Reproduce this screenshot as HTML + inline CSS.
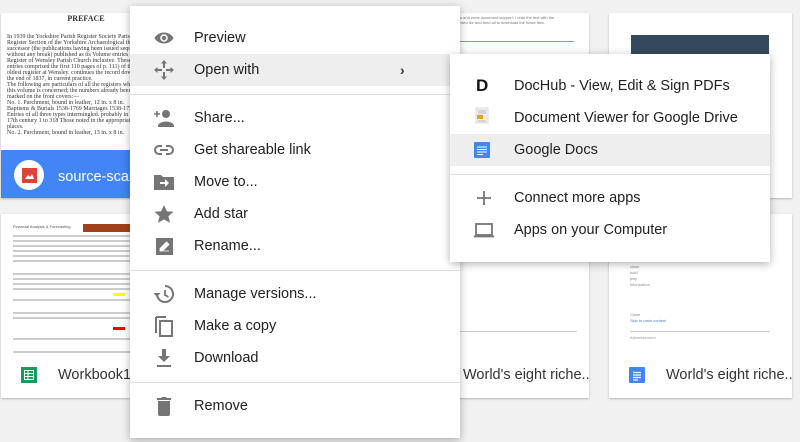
<!DOCTYPE html>
<html><head><style>
body{margin:0;width:800px;height:442px;background:#f1f1f1;font-family:"Liberation Sans",Arial,sans-serif;position:relative;overflow:hidden}
.card{position:absolute;background:#fff;box-shadow:0 1px 2px rgba(0,0,0,.25);overflow:hidden}
.menu{position:absolute;background:#fff;box-shadow:0 2px 8px rgba(0,0,0,.3)}
.it{position:absolute;left:0;right:0;height:32px;font-size:14.5px;color:#212121;line-height:32px;white-space:nowrap}
.it .t{position:absolute;left:64px}
.it svg{position:absolute;left:22px;top:4px}
.hl{background:#eeeeee}
.div{position:absolute;left:0;right:0;height:1px;background:#e0e0e0}
.ft{position:absolute;font-size:14.5px;color:#333;white-space:nowrap}
.ln{height:2px;background:#ccc;margin:3px 0}
</style></head><body>
<!-- card1 -->
<div class="card" style="left:1px;top:13px;width:150px;height:185px">
 <div style="position:absolute;left:0;top:0;width:150px;height:137px;font-family:'Liberation Serif',serif;font-size:6px;color:#333;padding:3px 6px;box-sizing:border-box;line-height:6px">
  <div style="text-align:center;font-weight:bold;font-size:8px;margin-left:20px">PREFACE</div><br><br>
  In 1939 the Yorkshire Parish Register Society Parish Register Section of the Yorkshire Archaeological the successor (the publications having been issued sequence without any break) published as its Volume entries in the Register of Wensley Parish Church inclusive. These entries comprised the first 110 pages of p. 111) of the oldest register at Wensley. continues the record down to the end of 1837, in current practice.<br>The following are particulars of all the registers which this volume is concerned; the numbers already been marked on the front covers:—<br>No. 1. Parchment, bound in leather, 12 in. x 8 in. Baptisms &amp; Burials 1538-1769 Marriages 1538-1754 Entries of all three types intermingled. probably in the 17th century 1 to 318 Those noted in the appropriate places.<br>No. 2. Parchment, bound in leather, 13 in. x 8 in.
 </div>
 <div style="position:absolute;left:0;top:137px;width:150px;height:48px;background:#4285f4"></div>
 <div style="position:absolute;left:13px;top:147px;width:30px;height:30px;border-radius:50%;background:#fff"></div>
 <div style="position:absolute;left:21px;top:155px;width:15px;height:15px;background:#db4437"></div>
 <svg style="position:absolute;left:21px;top:155px" width="15" height="15"><path d="M3 11 L6 7 L8 9 L10 6 L12 11Z" fill="#fff"/></svg>
 <div style="position:absolute;left:57px;top:154px;color:#fff;font-size:14.5px;line-height:20px;white-space:nowrap">source-scann</div>
</div>
<!-- card2 -->
<div class="card" style="left:1px;top:214px;width:150px;height:184px">
 <div style="position:absolute;left:12px;top:10px;width:140px;font-size:4px;color:#555">
  <div style="height:8px;background:#fff;position:relative">Financial Analysis &amp; Forecasting<div style="position:absolute;left:70px;top:0;width:70px;height:8px;background:#a0411a"></div></div>
  <div class="ln"></div><div class="ln"></div><div class="ln"></div><div class="ln"></div><div class="ln"></div><div class="ln"></div><br>
  <div class="ln"></div><div class="ln"></div><div class="ln"></div><div class="ln"></div><div style="height:3px;width:12px;background:#ff0;margin-left:100px"></div><div class="ln"></div><br><div class="ln"></div><div class="ln"></div><br>
  <div style="height:3px;width:12px;background:#f00;margin-left:100px"></div><br><div class="ln"></div><br><div class="ln"></div>
 </div>
 <div style="position:absolute;left:20px;top:153px;width:16px;height:16px;background:#0f9d58"></div>
 <svg style="position:absolute;left:20px;top:153px" width="16" height="16"><path d="M3.5 3.5h9v9h-9zM3.5 6.5h9M3.5 9.5h9M7 3.5v9" stroke="#fff" fill="none"/></svg>
 <div class="ft" style="left:57px;top:153px">Workbook1-2</div>
</div>
<!-- card3,6 -->
<div class="card" style="left:400px;top:13px;width:189px;height:185px">
 <div style="position:absolute;left:50px;top:28px;width:124px;height:1px;background:#6a9fd8"></div>
 <div style="position:absolute;left:50px;top:2px;width:120px;font-size:4px;color:#777;line-height:5px">shares and ends document support. I read the text with the converted file and tried all to download the Word files.</div>
</div>
<div class="card" style="left:400px;top:214px;width:189px;height:184px">
 <div style="position:absolute;left:50px;top:117px;width:127px;height:1px;background:#ccc"></div>
 <div class="ft" style="left:63px;top:153px">World's eight riche...</div>
</div>
<!-- card4,5 -->
<div class="card" style="left:609px;top:13px;width:183px;height:185px">
 <div style="position:absolute;left:22px;top:22px;width:138px;height:40px;background:#34495e"></div>
 <div class="ft" style="left:150px;top:153px">...</div>
</div>
<div class="card" style="left:609px;top:214px;width:183px;height:184px">
 <div style="position:absolute;left:21px;top:50px;font-size:4px;color:#888;line-height:6px">close<br>hold<br>jelly<br>information<br><br><br><br><br>Close<br><span style="color:#4a7fc0">Skip to main content</span></div>
 <div style="position:absolute;left:21px;top:117px;width:140px;height:1px;background:#ccc"></div>
 <div style="position:absolute;left:21px;top:121px;font-size:4px;color:#999">Advertisement</div>
 <div style="position:absolute;left:20px;top:153px;width:16px;height:16px;background:#4285f4;border-radius:1px"></div>
 <svg style="position:absolute;left:20px;top:153px" width="16" height="16"><path d="M4 5.5h8M4 8h8M4 10.5h8M4 13h5" stroke="#fff" stroke-width="1.2"/></svg>
 <div class="ft" style="left:57px;top:153px">World's eight riche...</div>
</div>

<!-- main menu -->
<div class="menu" style="left:130px;top:6px;width:330px;height:432px">
 <div class="it" style="top:16px"><svg width="24" height="24"><path d="M12 6.5C7 6.5 3.7 9.6 2.5 12c1.2 2.4 4.5 5.5 9.5 5.5s8.3-3.1 9.5-5.5C20.3 9.6 17 6.5 12 6.5z" fill="#757575"/><circle cx="12" cy="12" r="3.8" fill="#fff"/><circle cx="12" cy="12" r="2.2" fill="#757575"/></svg><span class="t">Preview</span></div>
 <div class="it hl" style="top:48px"><svg width="24" height="24"><path d="M12 2l3 3.5h-2v4.5h-2V5.5H9zM12 22l-3-3.5h2V14h2v4.5h2zM2 12l3.5-3v2H10v2H5.5v2zM22 12l-3.5 3v-2H14v-2h4.5V9z" fill="#757575"/></svg><span class="t">Open with</span><span style="position:absolute;left:270px;font-size:14px;color:#333;font-weight:bold">›</span></div>
 <div class="div" style="top:88px"></div>
 <div class="it" style="top:96px"><svg width="24" height="24"><circle cx="14" cy="8" r="4" fill="#757575"/><path d="M6 20c0-3 5-4.5 8-4.5s8 1.5 8 4.5v1H6z" fill="#757575"/><path d="M2 8h6M5 5v6" stroke="#757575" stroke-width="1.6"/></svg><span class="t">Share...</span></div>
 <div class="it" style="top:128px"><svg width="24" height="24"><path d="M10 8H7a4 4 0 000 8h3M14 8h3a4 4 0 010 8h-3M8 12h8" stroke="#757575" stroke-width="2" fill="none"/></svg><span class="t">Get shareable link</span></div>
 <div class="it" style="top:160px"><svg width="24" height="24"><path d="M2 5h7l2 2h11v13H2z" fill="#757575"/><path d="M8 12h5v-3l4 4-4 4v-3H8z" fill="#fff"/></svg><span class="t">Move to...</span></div>
 <div class="it" style="top:192px"><svg width="24" height="24"><path d="M12 3l2.8 6.2 6.7.6-5.1 4.5 1.6 6.6L12 17.4l-6 3.5 1.6-6.6-5.1-4.5 6.7-.6z" fill="#757575"/></svg><span class="t">Add star</span></div>
 <div class="it" style="top:224px"><svg width="24" height="24"><rect x="4" y="4" width="17" height="17" fill="#757575"/><path d="M8 17v-2.5l6.5-6.5 2.5 2.5-6.5 6.5z M11 17h6" fill="#fff" stroke="#fff" stroke-width=".8"/></svg><span class="t">Rename...</span></div>
 <div class="div" style="top:264px"></div>
 <div class="it" style="top:272px"><svg width="24" height="24"><path d="M5 12a8 8 0 108-8" stroke="#757575" stroke-width="2" fill="none"/><path d="M1.5 11h7l-3.5 4z" fill="#757575"/><path d="M13 8v5l3.5 2" stroke="#757575" stroke-width="1.8" fill="none"/></svg><span class="t">Manage versions...</span></div>
 <div class="it" style="top:304px"><svg width="24" height="24"><path d="M4 3v16M4 3h10" stroke="#757575" stroke-width="2" fill="none"/><rect x="8" y="7" width="12" height="15" stroke="#757575" stroke-width="2" fill="none"/></svg><span class="t">Make a copy</span></div>
 <div class="it" style="top:336px"><svg width="24" height="24"><path d="M10 3h4v7h4l-6 6-6-6h4zM5 19h14v2H5z" fill="#757575"/></svg><span class="t">Download</span></div>
 <div class="div" style="top:376px"></div>
 <div class="it" style="top:384px"><svg width="24" height="24"><path d="M6 7h12v13a2 2 0 01-2 2H8a2 2 0 01-2-2zM5 4h4l1-1h4l1 1h4v2H5z" fill="#757575"/></svg><span class="t">Remove</span></div>
</div>

<!-- submenu -->
<div class="menu" style="left:450px;top:54px;width:320px;height:208px">
 <div class="it" style="top:16px"><span style="position:absolute;left:26px;font-weight:bold;font-size:17px;color:#111">D</span><span class="t">DocHub - View, Edit &amp; Sign PDFs</span></div>
 <div class="it" style="top:48px"><svg width="24" height="24" style="left:24px"><rect x="2" y="2" width="12" height="15" fill="#eee" stroke="#ddd"/><rect x="3" y="9" width="6" height="4" fill="#e0a020"/><path d="M4 5h8M4 7h8M4 15h8" stroke="#bbb"/></svg><span class="t">Document Viewer for Google Drive</span></div>
 <div class="it hl" style="top:80px"><svg width="24" height="24" style="left:24px"><rect x="0" y="4" width="16" height="16" rx="1" fill="#4285f4"/><path d="M3 9h10M3 11.5h10M3 14h10M3 16.5h6" stroke="#fff" stroke-width="1.1"/></svg><span class="t">Google Docs</span></div>
 <div class="div" style="top:120px"></div>
 <div class="it" style="top:128px"><svg width="24" height="24"><path d="M12 5v14M5 12h14" stroke="#757575" stroke-width="1.8"/></svg><span class="t">Connect more apps</span></div>
 <div class="it" style="top:160px"><svg width="24" height="24"><rect x="4" y="6" width="16" height="11" stroke="#757575" stroke-width="1.8" fill="none"/><path d="M2 18.5h20" stroke="#757575" stroke-width="1.8"/></svg><span class="t">Apps on your Computer</span></div>
</div>
</body></html>
